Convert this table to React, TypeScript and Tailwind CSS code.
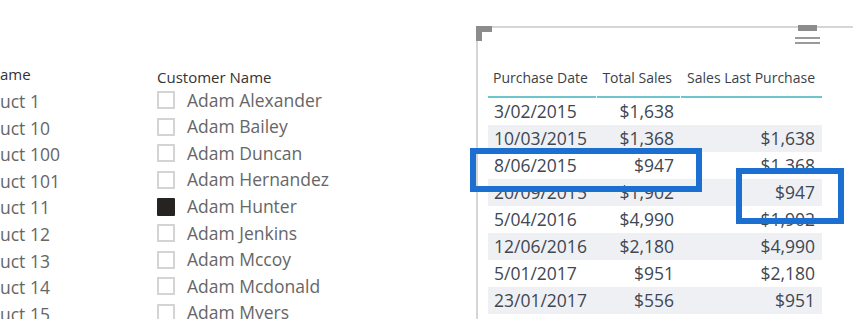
import React from "react";

const products = ["uct 1", "uct 10", "uct 100", "uct 101", "uct 11", "uct 12", "uct 13", "uct 14", "uct 15"];
const customers = [
  "Adam Alexander",
  "Adam Bailey",
  "Adam Duncan",
  "Adam Hernandez",
  "Adam Hunter",
  "Adam Jenkins",
  "Adam Mccoy",
  "Adam Mcdonald",
  "Adam Myers",
];
const rows: [string, string, string][] = [
  ["3/02/2015", "$1,638", ""],
  ["10/03/2015", "$1,368", "$1,638"],
  ["8/06/2015", "$947", "$1,368"],
  ["20/09/2015", "$1,902", "$947"],
  ["5/04/2016", "$4,990", "$1,902"],
  ["12/06/2016", "$2,180", "$4,990"],
  ["5/01/2017", "$951", "$2,180"],
  ["23/01/2017", "$556", "$951"],
];

export default function App() {
  return (
    <div
      className="relative w-[853px] h-[319px] overflow-hidden bg-white flex items-start"
      style={{ fontFamily: '"Open Sans", "Noto Sans", sans-serif' }}
    >
      {/* Product column (clipped) */}
      <div className="w-[157px] shrink-0 pt-[64px]">
        <div className="h-[20px] leading-[20px] text-[15px] text-[#333]">ame</div>
        <div className="mt-[4px]">
          {products.map((p) => (
            <div key={p} className="h-[26.6px] leading-[26.6px] text-[17.5px] text-[#666]">
              {p}
            </div>
          ))}
        </div>
      </div>

      {/* Customer slicer */}
      <div className="w-[319px] shrink-0 pt-[67px]">
        <div className="h-[20px] leading-[20px] text-[15px] text-[#333]">Customer Name</div>
        {customers.map((c) => (
          <div key={c} className="h-[26.6px] flex items-center gap-[12px]">
            {c === "Adam Hunter" ? (
              <div className="w-[18px] h-[18px] bg-[#252423] rounded-[1px] shrink-0" />
            ) : (
              <div className="w-[18px] h-[18px] border-2 border-[#d4d4d4] bg-white shrink-0" />
            )}
            <span className="text-[17.5px] text-[#666] leading-none">{c}</span>
          </div>
        ))}
      </div>

      {/* Table visual */}
      <div className="relative mt-[26px] flex-1 h-[300px] border-t-2 border-l-2 border-[#d6d6d6] pl-[10px] pt-[37px]">
        {/* corner handle */}
        <div className="absolute -left-[2px] -top-[2px] w-[16px] h-[6px] bg-[#8c8c8c]" />
        <div className="absolute -left-[2px] -top-[2px] w-[6px] h-[15px] bg-[#8c8c8c]" />
        {/* top handle + menu */}
        <div className="absolute left-[320px] -top-[3px] w-[19px] h-[6px] bg-[#8c8c8c]" />
        <div className="absolute left-[317px] top-[9px] w-[25px] h-[2px] bg-[#9a9a9a]" />
        <div className="absolute left-[317px] top-[14px] w-[25px] h-[2px] bg-[#9a9a9a]" />

        <div className="w-[334px]">
          <div className="grid grid-cols-[108px_83px_141px] gap-x-px text-[14px] text-[#3a3f47]">
            <div className="h-[33px] leading-[26px] pl-[5px] border-b-2 border-[#6cc6cc]">Purchase Date</div>
            <div className="h-[33px] leading-[26px] pr-[8px] text-right border-b-2 border-[#6cc6cc]">Total Sales</div>
            <div className="h-[33px] leading-[26px] pr-[7px] text-right border-b-2 border-[#6cc6cc]">Sales Last Purchase</div>
          </div>
          {rows.map((r, i) => (
            <div
              key={r[0]}
              className={
                "grid grid-cols-[109px_84px_141px] h-[27px] leading-[27px] text-[17.5px] text-[#404752] " +
                (i % 2 === 1 ? "bg-[#eef0f4]" : "bg-white")
              }
            >
              <div className="pl-[6px]">{r[0]}</div>
              <div className="pr-[7px] text-right">{r[1]}</div>
              <div className="pr-[7px] text-right">{r[2]}</div>
            </div>
          ))}
        </div>
      </div>

      {/* highlight boxes */}
      <div className="absolute left-[470px] top-[148px] w-[232px] h-[44px] border-[6px] border-[#1a6fd0]" />
      <div className="absolute left-[736px] top-[168px] w-[108px] h-[56px] border-[6px] border-[#1a6fd0]" />
    </div>
  );
}
